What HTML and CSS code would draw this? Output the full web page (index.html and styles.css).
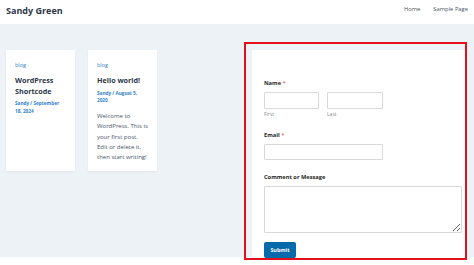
FILE: index.html
```html
<!DOCTYPE html>
<html lang="en">
<head>
  <title>Sandy Green</title>
  <meta charset="UTF-8">
  <link rel="stylesheet" href="styles.css">
</head>
<body>
<header class="site-header">
  <div class="site-title">Sandy Green</div>
  <nav class="site-nav">
    <a href="#">Home</a>
    <a href="#">Sample Page</a>
  </nav>
</header>
<main class="content">
  <div class="posts">
    <article class="card">
      <div class="card-cat">blog</div>
      <h2 class="card-title">WordPress Shortcode</h2>
      <div class="card-meta">Sandy / September 18, 2024</div>
    </article>
    <article class="card">
      <div class="card-cat">blog</div>
      <h2 class="card-title">Hello world!</h2>
      <div class="card-meta">Sandy / August 5, 2020</div>
      <p class="card-text">Welcome to WordPress. This is your first post. Edit or delete it, then start writing!</p>
    </article>
  </div>
  <div class="form-wrap">
    <form class="contact">
      <div class="field">
        <div class="label">Name <span class="req">*</span></div>
        <div class="name-row">
          <div class="name-col">
            <input type="text" class="input input-first">
            <div class="sublabel">First</div>
          </div>
          <div class="name-col">
            <input type="text" class="input input-last">
            <div class="sublabel">Last</div>
          </div>
        </div>
      </div>
      <div class="field">
        <div class="label">Email <span class="req">*</span></div>
        <input type="text" class="input input-email">
      </div>
      <div class="field">
        <div class="label">Comment or Message</div>
        <textarea class="input textarea"></textarea>
      </div>
      <button type="button" class="submit">Submit</button>
    </form>
  </div>
</main>
</body>
</html>
```

FILE: styles.css
```css
html, body {
  height: 265px;
  overflow: hidden;
}

body {
  margin: 0;
  width: 474px;
  font-family: "Open Sans", "Noto Sans", sans-serif;
  background: #fff;
  color: #4a5568;
}

.site-header {
  height: 24px;
  display: flex;
  align-items: center;
  justify-content: space-between;
  padding: 0 6px;
}

.site-title {
  font-size: 9px;
  font-weight: 700;
  color: #2d3748;
  padding-bottom: 4px;
}

.site-nav {
  display: flex;
  gap: 13px;
  padding-bottom: 6px;
}

.site-nav a {
  font-size: 5.8px;
  color: #4a5568;
  text-decoration: none;
}

.content {
  height: 233px;
  background: #edf2f7;
  display: flex;
  align-items: flex-start;
  padding-left: 6px;
  box-sizing: border-box;
}

.posts {
  display: flex;
  gap: 13px;
  margin-top: 26px;
}

.card {
  width: 69px;
  height: 121px;
  box-sizing: border-box;
  background: #fff;
  padding: 10px 9px 0;
  box-shadow: 0 1px 2px rgba(0, 0, 0, 0.05);
}

.card-cat {
  font-size: 5.5px;
  line-height: 10px;
  color: #3182ce;
}

.card-title {
  margin: 5px 0 4px;
  font-size: 7.2px;
  line-height: 10.5px;
  font-weight: 700;
  color: #2d3748;
}

.card-meta {
  font-size: 4.7px;
  line-height: 7.6px;
  font-weight: 700;
  color: #3182ce;
}

.card-text {
  margin: 6.5px 0 0;
  font-size: 6px;
  line-height: 10.3px;
  color: #4a5568;
}

.form-wrap {
  margin-left: 87px;
  margin-top: 18px;
  width: 223px;
  height: 218px;
  box-sizing: border-box;
  border: 2px solid #e3111b;
  padding: 6px 0 0 6px;
  flex-shrink: 0;
}

.contact {
  height: 100%;
  background: #fff;
  padding: 28px 0 0 12px;
  box-sizing: border-box;
}

.field {
  margin-bottom: 12px;
}

.label {
  font-size: 5.7px;
  line-height: 10px;
  font-weight: 700;
  color: #262626;
  margin-bottom: 4px;
}

.req {
  color: #d63637;
  font-weight: 400;
}

.name-row {
  display: flex;
  gap: 8px;
}

.input {
  display: block;
  box-sizing: border-box;
  border: 1px solid #d9d9d9;
  background: #fff;
  border-radius: 1px;
  margin: 0;
  padding: 0;
}

.input-first {
  width: 55px;
  height: 17px;
}

.input-last {
  width: 56px;
  height: 17px;
}

.sublabel {
  font-size: 5px;
  line-height: 7px;
  color: #8a8a8a;
  margin-top: 2px;
}

.input-email {
  width: 119px;
  height: 16px;
}

.textarea {
  width: 198px;
  height: 47px;
  resize: vertical;
}

.submit {
  display: block;
  margin-top: -3px;
  width: 32px;
  height: 16px;
  padding: 0;
  border: 0;
  border-radius: 2px;
  background: #066aab;
  color: #fff;
  font-family: inherit;
  font-size: 5.4px;
  font-weight: 700;
}
```
